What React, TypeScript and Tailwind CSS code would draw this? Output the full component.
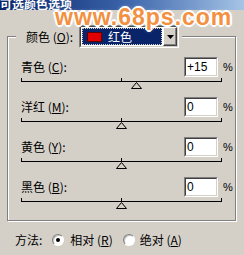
import React from "react"

type RowProps = {
  name: string
  hot: string
  value: string
  pos: number
}

const cjk = "font-['SimSun','Noto_Sans_CJK_SC',sans-serif]"

const Slider = ({ pos }: { pos: number }) => {
  return (
    <div className="relative ml-[13px] mt-[4px] h-[8px] w-[201px]">
      <div className="h-px w-full bg-black" />
      <div className="absolute -top-[3px] left-0 h-[3px] w-px bg-black" />
      <div className="absolute -top-[3px] left-[100px] h-[3px] w-px bg-black" />
      <div className="absolute -top-[3px] right-0 h-[3px] w-px bg-black" />
      <svg
        width="11"
        height="7"
        className="absolute top-[1px]"
        style={{ left: 95 + pos }}
      >
        <polygon points="5.5,0.5 10.5,6.5 0.5,6.5" fill="#d4d0c8" stroke="#000" />
      </svg>
    </div>
  )
}

const Row = ({ name, hot, value, pos }: RowProps) => {
  return (
    <div className="flex h-[40px] flex-col">
      <div className="flex h-[20px] items-center">
        <span className="ml-[13px] w-[163px] text-[12px] leading-none text-black">
          {name} (<u>{hot}</u>):
        </span>
        <div className="h-[20px] w-[34px] border border-b-white border-l-[#808080] border-r-white border-t-[#808080]">
          <div className="flex h-full w-full items-center border border-b-[#d4d0c8] border-l-[#404040] border-r-[#d4d0c8] border-t-[#404040] bg-white pl-[1px] font-['Liberation_Sans',sans-serif] text-[12px] leading-none">
            {value}
          </div>
        </div>
        <span className="ml-[5px] font-['Liberation_Sans',sans-serif] text-[11px] leading-none">%</span>
      </div>
      <Slider pos={pos} />
    </div>
  )
}

const Radio = ({ checked }: { checked?: boolean }) => {
  return (
    <div className="flex h-[12px] w-[12px] items-center justify-center rounded-full border border-b-white border-l-[#808080] border-r-white border-t-[#808080] bg-white shadow-[inset_1px_1px_0_#c0c0c0]">
      {checked && <div className="h-[4px] w-[4px] rounded-full bg-black" />}
    </div>
  )
}

const App = (): JSX.Element => {
  const rows: RowProps[] = [
    { name: "青色", hot: "C", value: "+15", pos: 15 },
    { name: "洋红", hot: "M", value: "0", pos: 0 },
    { name: "黄色", hot: "Y", value: "0", pos: 0 },
    { name: "黑色", hot: "B", value: "0", pos: 0 }
  ]

  return (
    <div className={`relative h-[255px] w-[244px] overflow-hidden bg-[#d4d0c8] ${cjk}`}>
      {/* title bar, cut off at the top */}
      <div className="h-[10px] overflow-hidden bg-linear-to-r from-[#0a246a] via-[#3a62a8] to-[#a6c4e6]">
        <div className="-mt-[3px] text-[12px] font-bold leading-[14px] text-white">
          可选颜色选项
        </div>
      </div>

      <fieldset className="ml-[7px] mt-[15px] w-[229px] border border-[#808080] pb-[3px] pt-[9px] shadow-[1px_1px_0_#fff,inset_1px_1px_0_#fff]">
        <legend className="ml-[8px] bg-[#d4d0c8] pl-[10px] pr-[3px]">
          <div className="flex items-center">
            <span className="text-[12px] leading-none text-black">
              颜色 (<u>O</u>):
            </span>
            <div className="ml-[6px] h-[23px] w-[100px] border border-b-white border-l-[#808080] border-r-white border-t-[#808080]">
              <div className="flex h-full w-full border border-b-[#d4d0c8] border-l-[#404040] border-r-[#d4d0c8] border-t-[#404040] bg-white">
                <div className="m-[1px] flex flex-1 items-center bg-[#0a246a] pl-[5px] outline-1 outline-dotted outline-[#d4d0c8] -outline-offset-1">
                  <div className="h-[10px] w-[15px] border border-[#600000] bg-[#e00000]" />
                  <span className="ml-[6px] text-[12px] leading-none text-white">红色</span>
                </div>
                <div className="flex w-[14px] items-center justify-center border border-b-[#404040] border-l-white border-r-[#404040] border-t-white bg-[#d4d0c8] shadow-[inset_-1px_-1px_0_#808080]">
                  <svg width="7" height="4">
                    <polygon points="0,0 7,0 3.5,4" fill="#000" />
                  </svg>
                </div>
              </div>
            </div>
          </div>
        </legend>

        {rows.map((r) => (
          <Row key={r.hot} {...r} />
        ))}
      </fieldset>

      <div className="mt-[12px] flex h-[14px] items-center pl-[15px] text-[12px] leading-none text-black">
        <span>方法:</span>
        <div className="ml-[10px]">
          <Radio checked />
        </div>
        <span className="ml-[6px]">
          相对 (<u>R</u>)
        </span>
        <div className="ml-[10px]">
          <Radio />
        </div>
        <span className="ml-[5px]">
          绝对 (<u>A</u>)
        </span>
      </div>

      {/* watermark over the dialog */}
      <div className="absolute left-[55px] top-[6px] font-['Liberation_Sans',sans-serif] text-[23px] font-bold leading-none tracking-[1px] text-[#f39042] [text-shadow:2px_0_#fff,-2px_0_#fff,0_2px_#fff,0_-2px_#fff,1px_1px_#fff,-1px_-1px_#fff,1px_-1px_#fff,-1px_1px_#fff,0_0_4px_#fff]">
        www.68ps.com
      </div>
    </div>
  )
}

export default App
